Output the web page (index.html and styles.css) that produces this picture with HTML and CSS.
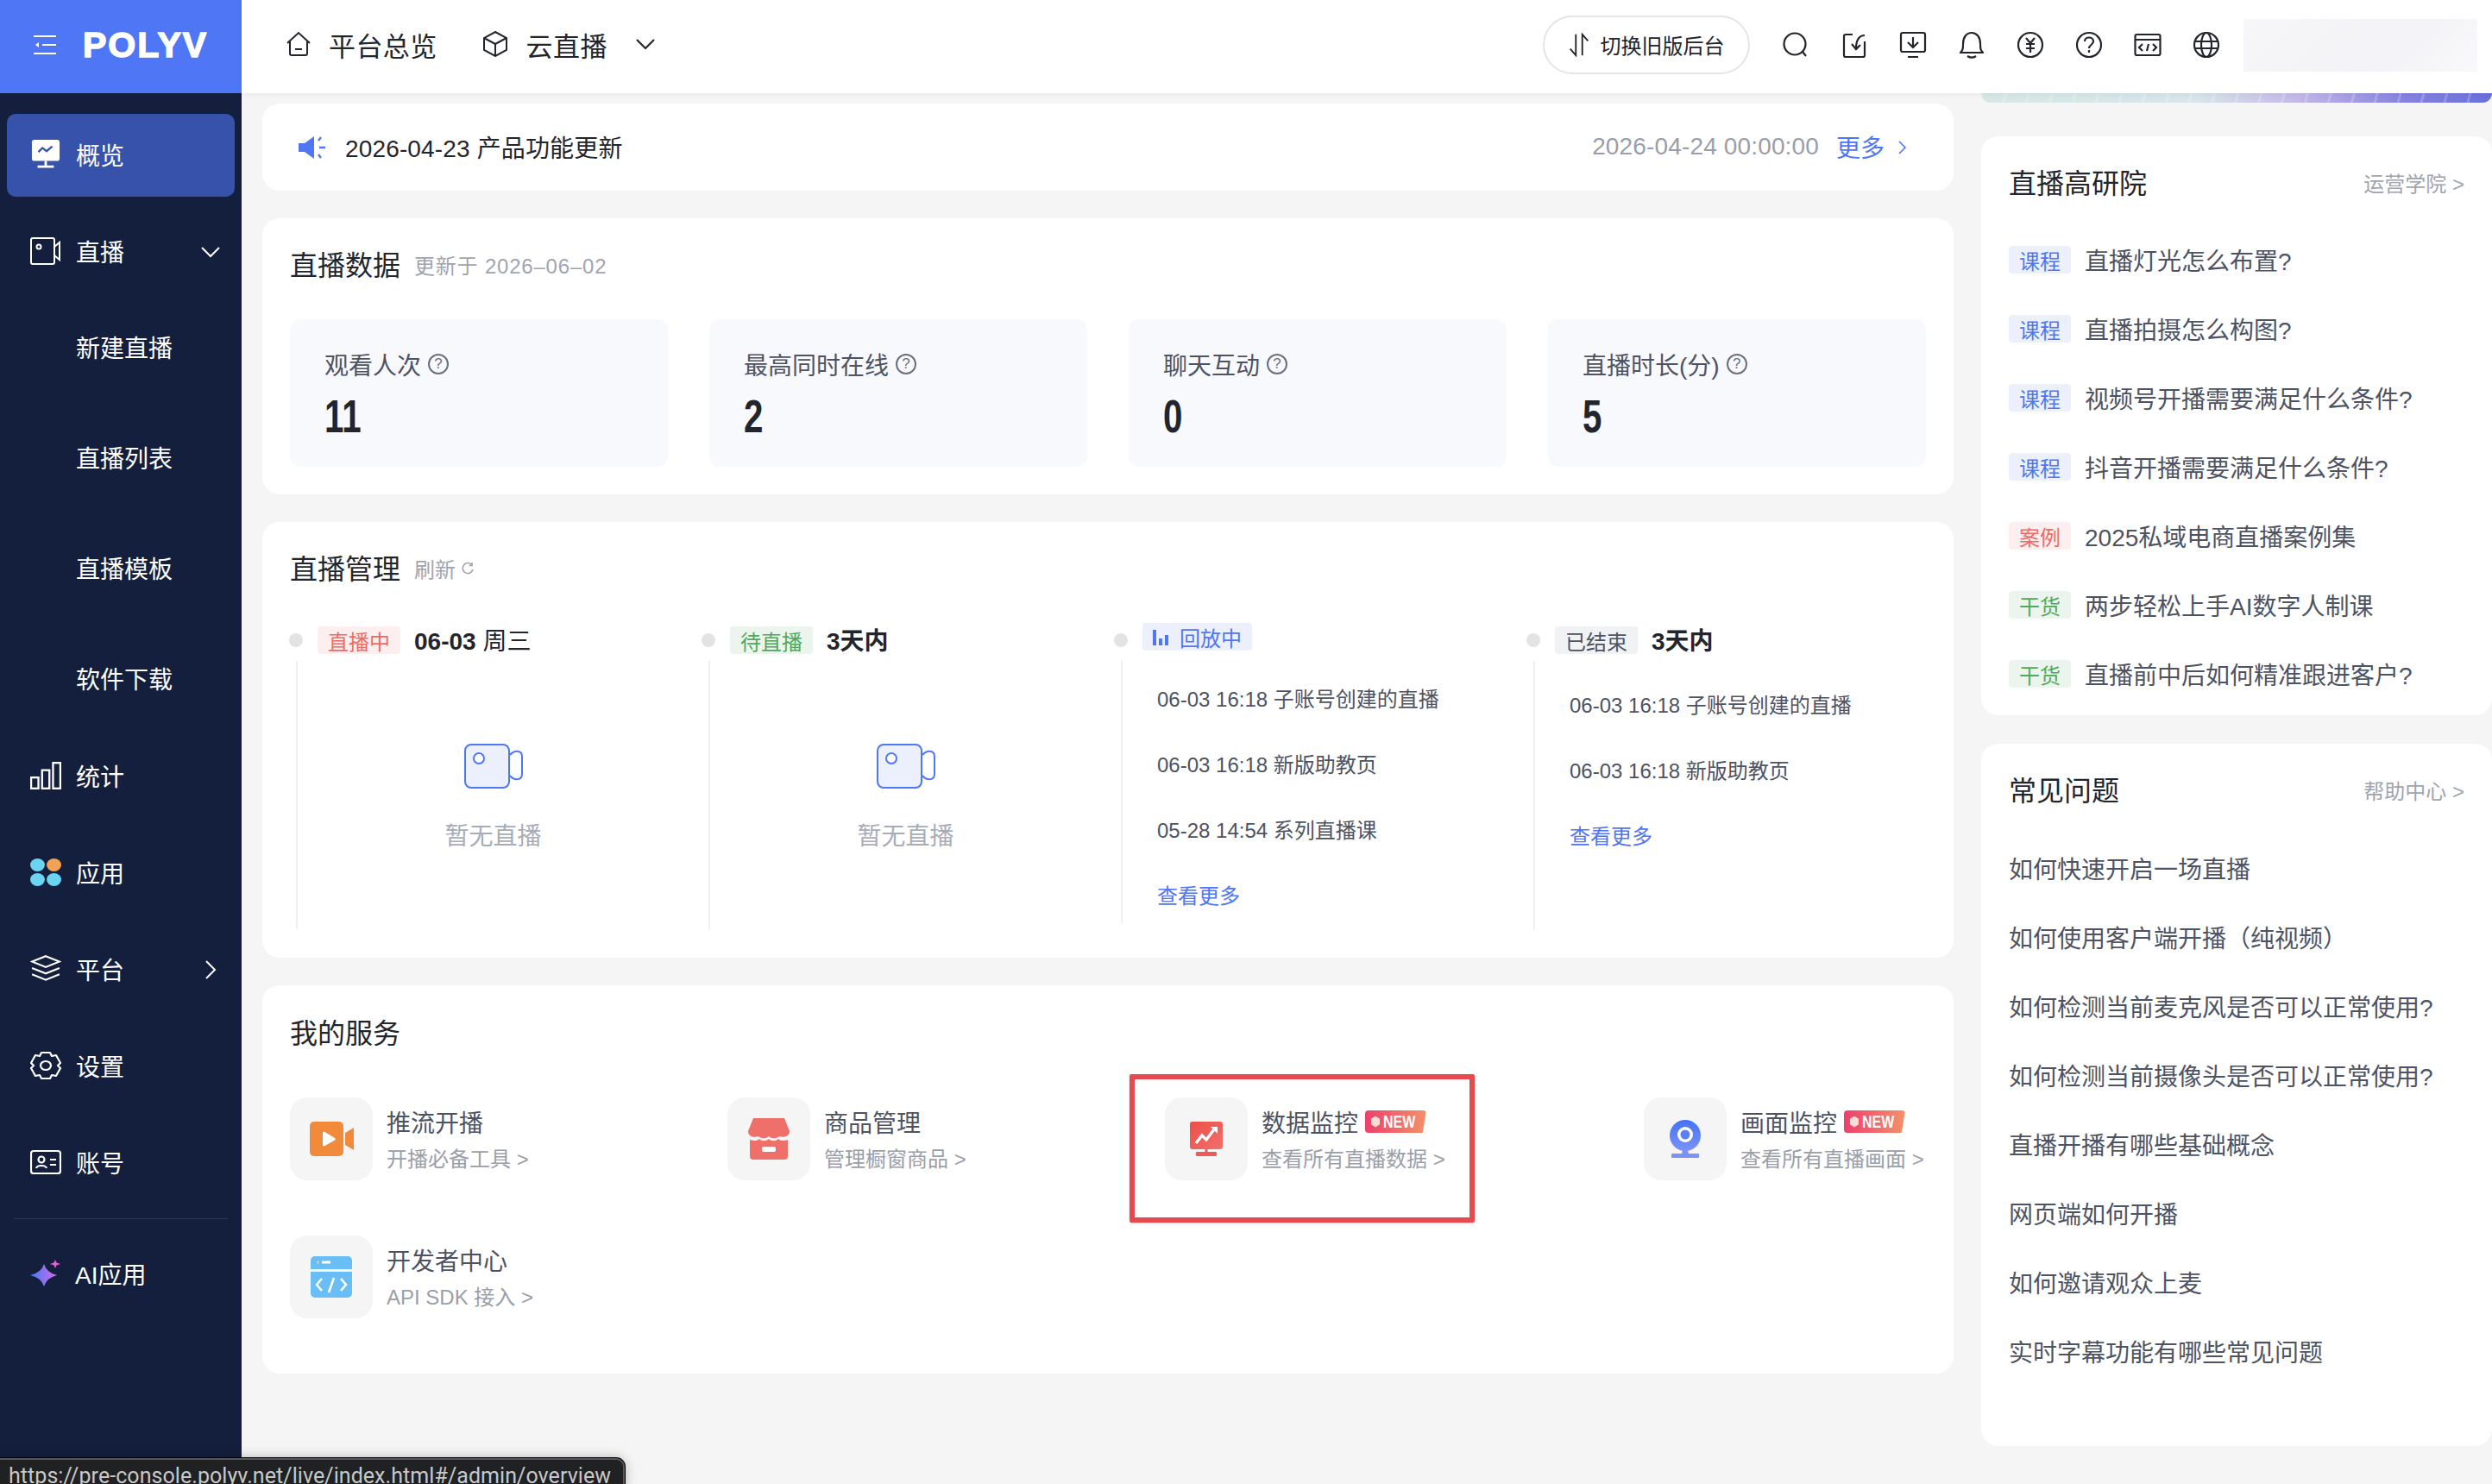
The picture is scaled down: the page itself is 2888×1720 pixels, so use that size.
FILE: index.html
```html
<!DOCTYPE html>
<html lang="zh-CN">
<head>
  <meta charset="UTF-8">
  <title>POLYV 概览</title>
  <link rel="stylesheet" href="styles.css">
</head>
<body>
  <div class="app">
    <!-- left sidebar -->
    <aside class="sidebar">
      <div class="brand">
        <svg class="brand-menu" viewBox="0 0 26 22" fill="none" stroke="#fff" stroke-width="2"><path d="M0 1h26M10 11h16M0 21h26"/><path d="M6 8l-4 3 4 3z" fill="#fff" stroke="none"/></svg>
        <span class="brand-name">POLYV</span>
      </div>
      <nav class="side-nav">
        <a class="side-item active">
          <svg class="side-icon" viewBox="0 0 36 36"><rect x="1" y="0" width="34" height="26" rx="3" fill="#fff"/><path d="M9 15l5-5 5 4 7-6" fill="none" stroke="#3752ab" stroke-width="2.4"/><path d="M18 26v6M8 33h20" stroke="#fff" stroke-width="3"/></svg>
          <span>概览</span>
        </a>
        <a class="side-item open">
          <svg class="side-icon" viewBox="0 0 36 32" fill="none" stroke="#fff" stroke-width="2"><rect x="1" y="1" width="27" height="30" rx="2"/><circle cx="10" cy="11" r="2.5"/><path d="M28 11l6-5v20l-6-5"/></svg>
          <span>直播</span>
          <svg class="side-caret" viewBox="0 0 22 14" fill="none" stroke="#fff" stroke-width="2"><path d="M1 2l10 10L21 2"/></svg>
        </a>
        <a class="side-sub">新建直播</a>
        <a class="side-sub">直播列表</a>
        <a class="side-sub">直播模板</a>
        <a class="side-sub">软件下载</a>
        <a class="side-item">
          <svg class="side-icon" viewBox="0 0 34 30" fill="none" stroke="#fff" stroke-width="2.2"><rect x="1" y="17" width="8" height="12"/><rect x="13" y="9" width="8" height="20"/><rect x="25" y="1" width="8" height="28"/></svg>
          <span>统计</span>
        </a>
        <a class="side-item">
          <svg class="side-icon" viewBox="0 0 34 32"><ellipse cx="8" cy="8" rx="8" ry="7" fill="#6ad4f2"/><ellipse cx="26" cy="8" rx="8" ry="7" fill="#f2a255"/><ellipse cx="8" cy="24" rx="8" ry="7" fill="#6ad4f2"/><ellipse cx="26" cy="24" rx="8" ry="7" fill="#6ad4f2"/></svg>
          <span>应用</span>
        </a>
        <a class="side-item">
          <svg class="side-icon" viewBox="0 0 34 30" fill="none" stroke="#fff" stroke-width="2"><path d="M17 1l15 6-15 6L2 7z"/><path d="M2 14l15 6 15-6"/><path d="M2 21l15 6 15-6"/></svg>
          <span>平台</span>
          <svg class="side-caret side-caret-right" viewBox="0 0 14 22" fill="none" stroke="#fff" stroke-width="2"><path d="M2 1l10 10L2 21"/></svg>
        </a>
        <a class="side-item">
          <svg class="side-icon" viewBox="0 0 36 34" fill="none" stroke="#fff" stroke-width="2.2" stroke-linejoin="round"><path d="M13 2h10l2 4 5-1 5 9-3 3 3 3-5 9-5-1-2 4H13l-2-4-5 1-5-9 3-3-3-3 5-9 5 1z"/><ellipse cx="18" cy="17" rx="6" ry="5"/></svg>
          <span>设置</span>
        </a>
        <a class="side-item">
          <svg class="side-icon" viewBox="0 0 36 30" fill="none" stroke="#fff" stroke-width="2.2"><rect x="1" y="2" width="34" height="26" rx="3"/><circle cx="13" cy="12" r="3.5"/><path d="M7 22c1-4 11-4 12 0M23 12h7M23 18h7"/></svg>
          <span>账号</span>
        </a>
        <div class="side-divider"></div>
        <a class="side-item side-ai">
          <svg class="side-icon" viewBox="0 0 36 32"><defs><linearGradient id="aiGrad" x1="0" x2="1" y1="0" y2="0"><stop offset="0" stop-color="#3e7cf6"/><stop offset="1" stop-color="#d46be6"/></linearGradient></defs><path d="M16 5Q19 15 31 18Q19 21 16 31Q13 21 0 18Q13 15 16 5z" fill="url(#aiGrad)"/><path d="M29 0l1.500 3.500L35 5l-4.500 1.500L29 10l-1.500-3.500L23 5l4.500-1.500z" fill="#e75fd8"/></svg>
          <span>AI应用</span>
        </a>
      </nav>
    </aside>

    <div class="main">
      <!-- top bar -->
      <header class="topbar">
        <a class="top-link">
          <svg class="top-link-icon" viewBox="0 0 30 30" fill="none" stroke="#22252c" stroke-width="2"><path d="M2 14L15 2l13 12M5 12v14a2 2 0 0 0 2 2h16a2 2 0 0 0 2-2V12"/><path d="M11 21h8"/></svg>
          <span>平台总览</span>
        </a>
        <a class="top-link">
          <svg class="top-link-icon top-link-icon-wide" viewBox="0 0 30 30" fill="none" stroke="#22252c" stroke-width="2"><path d="M15 1l13 7v14l-13 7-13-7V8z"/><path d="M2 8l13 7 13-7M15 15v14"/></svg>
          <span>云直播</span>
          <svg class="top-caret" viewBox="0 0 22 14" fill="none" stroke="#22252c" stroke-width="2.2"><path d="M1 2l10 10L21 2"/></svg>
        </a>
        <div class="top-right">
          <button class="switch-btn">
            <svg class="switch-icon" viewBox="0 0 24 30" fill="none" stroke="#22252c" stroke-width="2"><path d="M8 2v26l-7-8M16 28V2l7 8"/></svg>
            切换旧版后台
          </button>
          <div class="top-icons">
            <svg viewBox="0 0 32 32" fill="none" stroke="#22252c" stroke-width="2.2"><circle cx="15" cy="15" r="12.500"/><path d="M24 24l4 5"/></svg>
            <svg viewBox="0 0 32 32" fill="none" stroke="#22252c" stroke-width="2.2"><path d="M14 4H6a2 2 0 0 0-2 2v22a2 2 0 0 0 2 2h20a2 2 0 0 0 2-2V12"/><path d="M28 5c-6 0-10 5-10 15M13 15l5 6 5-5"/></svg>
            <svg viewBox="0 0 32 32" fill="none" stroke="#22252c" stroke-width="2.2"><rect x="2" y="2" width="28" height="22" rx="2"/><path d="M16 7v11M10 13l6 6 6-6M10 30h12"/></svg>
            <svg viewBox="0 0 32 32" fill="none" stroke="#22252c" stroke-width="2.2" stroke-linejoin="round"><path d="M3 25h26c-3-3-3-5-3-10C26 7 22 2 16 2S6 7 6 15c0 5 0 7-3 10z"/><path d="M11 29c3 2 7 2 10 0"/></svg>
            <svg viewBox="0 0 32 32" fill="none" stroke="#22252c" stroke-width="2.2"><circle cx="16" cy="16" r="14"/><path d="M11 8l5 6 5-6M16 14v11M11 15h10M11 20h10"/></svg>
            <svg viewBox="0 0 32 32" fill="none" stroke="#22252c" stroke-width="2.2"><circle cx="16" cy="16" r="14"/><path d="M11 12c0-6 10-6 10 0 0 4-5 4-5 8M16 22v3"/></svg>
            <svg viewBox="0 0 32 32" fill="none" stroke="#22252c" stroke-width="2.2"><rect x="1.500" y="4" width="29" height="24" rx="2"/><path d="M1.500 10h29M10 15l-4 4 4 4M22 15l4 4-4 4M17 15l-2 8"/></svg>
            <svg viewBox="0 0 32 32" fill="none" stroke="#22252c" stroke-width="2.2"><circle cx="16" cy="16" r="14"/><ellipse cx="16" cy="16" rx="6" ry="14"/><path d="M2 12h28M2 20h28"/></svg>
          </div>
          <div class="user-blur"></div>
        </div>
      </header>

      <div class="content">
        <div class="col-left">
          <!-- notice -->
          <section class="card notice">
            <svg class="notice-icon" viewBox="0 0 32 28"><path d="M0 9h7l11-8v26L7 19H0z" fill="#4f76f5"/><path d="M23 6l3-4M24 14h7M23 22l3 4" stroke="#4f76f5" stroke-width="2.400"/></svg>
            <span class="notice-text">2026-04-23 产品功能更新</span>
            <span class="notice-date">2026-04-24 00:00:00</span>
            <a class="notice-more">更多</a>
            <svg class="notice-arrow" viewBox="0 0 10 16" fill="none" stroke="#4f76f5" stroke-width="1.600"><path d="M1 1l7 7-7 7"/></svg>
          </section>

          <!-- live data -->
          <section class="card data-card">
            <div class="card-head">
              <h2 class="card-title">直播数据</h2>
              <span class="card-sub">更新于 2026–06–02</span>
            </div>
            <div class="stat-row">
              <div class="stat"><div class="stat-label">观看人次<span class="help">?</span></div><div class="stat-value">11</div></div>
              <div class="stat"><div class="stat-label">最高同时在线<span class="help">?</span></div><div class="stat-value">2</div></div>
              <div class="stat"><div class="stat-label">聊天互动<span class="help">?</span></div><div class="stat-value">0</div></div>
              <div class="stat"><div class="stat-label">直播时长(分)<span class="help">?</span></div><div class="stat-value">5</div></div>
            </div>
          </section>

          <!-- live management -->
          <section class="card manage-card">
            <div class="card-head">
              <h2 class="card-title">直播管理</h2>
              <span class="card-sub card-sub-plain">刷新</span>
              <svg class="refresh-icon" viewBox="0 0 16 16" fill="none" stroke="#a0a4ae" stroke-width="1.600"><path d="M13 4a6 6 0 1 0 1 5M13 1v3.500h-3.500"/></svg>
            </div>
            <div class="timeline">
              <div class="tl-col">
                <div class="tl-head">
                  <span class="tag tag-red">直播中</span>
                  <span class="tl-date"><b>06-03</b> 周三</span>
                </div>
                <div class="tl-body tl-empty">
                  <svg class="empty-icon" viewBox="0 0 68 52" fill="#ecf0fd" stroke="#4f76f5" stroke-width="2"><rect x="1" y="1" width="51" height="50" rx="7"/><ellipse cx="17" cy="17" rx="6" ry="6" fill="#fff"/><path d="M53 13c5-6 14-6 14 2v20c0 8-9 8-14 2" fill="#fff"/></svg>
                  <p>暂无直播</p>
                </div>
              </div>
              <div class="tl-col">
                <div class="tl-head">
                  <span class="tag tag-green">待直播</span>
                  <span class="tl-date"><b>3天内</b></span>
                </div>
                <div class="tl-body tl-empty">
                  <svg class="empty-icon" viewBox="0 0 68 52" fill="#ecf0fd" stroke="#4f76f5" stroke-width="2"><rect x="1" y="1" width="51" height="50" rx="7"/><ellipse cx="17" cy="17" rx="6" ry="6" fill="#fff"/><path d="M53 13c5-6 14-6 14 2v20c0 8-9 8-14 2" fill="#fff"/></svg>
                  <p>暂无直播</p>
                </div>
              </div>
              <div class="tl-col">
                <div class="tl-head tl-head-up">
                  <span class="tag tag-blue">
                    <svg class="bars-icon" viewBox="0 0 18 20" fill="#4f76f5"><rect x="0" y="2" width="4" height="18"/><rect x="7" y="12" width="4" height="8"/><rect x="14" y="8" width="4" height="12"/></svg>
                    回放中
                  </span>
                </div>
                <div class="tl-body tl-list tl-short">
                  <a>06-03 16:18 子账号创建的直播</a>
                  <a>06-03 16:18 新版助教页</a>
                  <a>05-28 14:54 系列直播课</a>
                  <a class="tl-more">查看更多</a>
                </div>
              </div>
              <div class="tl-col">
                <div class="tl-head">
                  <span class="tag tag-gray">已结束</span>
                  <span class="tl-date"><b>3天内</b></span>
                </div>
                <div class="tl-body tl-list tl-low">
                  <a>06-03 16:18 子账号创建的直播</a>
                  <a>06-03 16:18 新版助教页</a>
                  <a class="tl-more">查看更多</a>
                </div>
              </div>
            </div>
          </section>

          <!-- services -->
          <section class="card service-card">
            <h2 class="card-title">我的服务</h2>
            <div class="service-grid">
              <div class="service">
                <div class="service-icon">
                  <svg class="ico-push" viewBox="0 0 51 40"><path d="M5 0h29a5 5 0 0 1 5 5v30a5 5 0 0 1-5 5H5a5 5 0 0 1-5-5V5a5 5 0 0 1 5-5z" fill="#f28a3c"/><path d="M41 13l10-6v26l-10-6z" fill="#f28a3c"/><path d="M15 13a1.500 1.500 0 0 1 2.500-1L29 19a1.500 1.500 0 0 1 0 2.500L17.500 28a1.500 1.500 0 0 1-2.500-1z" fill="#fff"/></svg>
                </div>
                <div class="service-text"><div class="service-name">推流开播</div><div class="service-sub">开播必备工具 &gt;</div></div>
              </div>
              <div class="service">
                <div class="service-icon">
                  <svg viewBox="0 0 48 48"><path d="M6 0h36l6 15c0 6-6 8-12 6-3 3-9 3-12 0-3 3-9 3-12 0-6 2-12 0-12-6z" fill="#ef706b"/><path d="M2 25c6 2 9 1 11-1 3 3 8 3 11 0 3 3 8 3 11 0 2 2 5 3 11 1v19a4 4 0 0 1-4 4H6a4 4 0 0 1-4-4z" fill="#ef706b"/><rect x="16" y="33" width="16" height="6" rx="2" fill="#fff"/></svg>
                </div>
                <div class="service-text"><div class="service-name">商品管理</div><div class="service-sub">管理橱窗商品 &gt;</div></div>
              </div>
              <div class="service">
                <div class="service-icon">
                  <svg class="ico-mon" viewBox="0 0 38 40"><defs><linearGradient id="monGrad" x1="0" x2="1" y1="0" y2="1"><stop offset="0" stop-color="#ec4f49"/><stop offset="1" stop-color="#f2706c"/></linearGradient></defs><rect width="38" height="32" rx="3" fill="url(#monGrad)"/><path d="M7 25l7-9 5 5 9-12" fill="none" stroke="#fff" stroke-width="3.400"/><path d="M24 6h8v8z" fill="#fff"/><path d="M19 32v3" stroke="#ee5a55" stroke-width="3"/><rect x="7" y="35" width="24" height="5" rx="1" fill="#ee5a55"/></svg>
                </div>
                <div class="service-text">
                  <div class="service-name">数据监控<span class="new-badge"><i></i><span>NEW</span></span></div>
                  <div class="service-sub">查看所有直播数据 &gt;</div>
                </div>
                <div class="focus-box"></div>
              </div>
              <div class="service">
                <div class="service-icon">
                  <svg class="ico-cam" viewBox="0 0 36 44"><defs><linearGradient id="camGrad" x1="0" x2="0" y1="0" y2="1"><stop offset="0" stop-color="#4472f5"/><stop offset="1" stop-color="#7b92f7"/></linearGradient></defs><ellipse cx="18" cy="18" rx="18" ry="18" fill="url(#camGrad)"/><circle cx="18" cy="17" r="9" fill="#fff"/><circle cx="18" cy="17" r="5.500" fill="#5a80f5"/><path d="M15 35h6l1 4h-8z" fill="#7b92f7"/><rect x="2" y="39" width="32" height="5" rx="1" fill="#7b92f7"/></svg>
                </div>
                <div class="service-text">
                  <div class="service-name">画面监控<span class="new-badge"><i></i><span>NEW</span></span></div>
                  <div class="service-sub">查看所有直播画面 &gt;</div>
                </div>
              </div>
              <div class="service">
                <div class="service-icon">
                  <svg viewBox="0 0 48 48"><path d="M5 0h38a5 5 0 0 1 5 5v10H0V5a5 5 0 0 1 5-5z" fill="#69bff5"/><path d="M0 18h48v25a5 5 0 0 1-5 5H5a5 5 0 0 1-5-5z" fill="#69bff5"/><path d="M8 7h1M13 7h10" stroke="#fff" stroke-width="3"/><path d="M13 26l-6 7 6 7M35 26l6 7-6 7M27 25l-6 17" fill="none" stroke="#fff" stroke-width="2.600"/></svg>
                </div>
                <div class="service-text"><div class="service-name">开发者中心</div><div class="service-sub">API SDK 接入 &gt;</div></div>
              </div>
            </div>
          </section>
        </div>

        <div class="col-right">
          <div class="banner"></div>
          <section class="card side-card">
            <div class="side-head">
              <h2 class="card-title">直播高研院</h2>
              <a class="side-link">运营学院 &gt;</a>
            </div>
            <ul class="side-list">
              <li><span class="tag tag-blue">课程</span>直播灯光怎么布置?</li>
              <li><span class="tag tag-blue">课程</span>直播拍摄怎么构图?</li>
              <li><span class="tag tag-blue">课程</span>视频号开播需要满足什么条件?</li>
              <li><span class="tag tag-blue">课程</span>抖音开播需要满足什么条件?</li>
              <li><span class="tag tag-red">案例</span>2025私域电商直播案例集</li>
              <li><span class="tag tag-green">干货</span>两步轻松上手AI数字人制课</li>
              <li><span class="tag tag-green">干货</span>直播前中后如何精准跟进客户?</li>
            </ul>
          </section>
          <section class="card side-card faq-card">
            <div class="side-head">
              <h2 class="card-title">常见问题</h2>
              <a class="side-link">帮助中心 &gt;</a>
            </div>
            <ul class="side-list">
              <li>如何快速开启一场直播</li>
              <li>如何使用客户端开播（纯视频）</li>
              <li>如何检测当前麦克风是否可以正常使用?</li>
              <li>如何检测当前摄像头是否可以正常使用?</li>
              <li>直播开播有哪些基础概念</li>
              <li>网页端如何开播</li>
              <li>如何邀请观众上麦</li>
              <li>实时字幕功能有哪些常见问题</li>
            </ul>
          </section>
        </div>
      </div>
    </div>
  </div>

  <div class="status-bar">https://pre-console.polyv.net/live/index.html#/admin/overview</div>
</body>
</html>
```

FILE: styles.css
```css
* {
  box-sizing: border-box;
}
html, body {
  height: 100%;
  margin: 0;
  overflow: hidden;
}
body {
  font-family: "Liberation Sans", "Noto Sans CJK SC", sans-serif;
  background-color: #f5f5f5;
  color: #22252c;
}
h2, p, ul {
  margin: 0;
  padding: 0;
}
.app {
  display: flex;
  height: 1720px;
}

/* sidebar */
.sidebar {
  width: 280px;
  flex-shrink: 0;
  background-color: #141f3d;
  color: #fff;
}
.brand {
  height: 108px;
  display: flex;
  align-items: center;
  padding-left: 39px;
  padding-bottom: 4px;
  background-color: #4f76f5;
}
.brand-menu {
  width: 26px;
  height: 22px;
}
.brand-name {
  margin-left: 31px;
  font-family: "Liberation Sans", sans-serif;
  font-size: 41px;
  font-weight: 700;
  letter-spacing: 2px;
  line-height: 1;
  -webkit-text-stroke: 1.5px #fff;
}
.side-nav {
  padding: 24px 8px 0;
}
.side-item {
  height: 96px;
  margin-bottom: 16px;
  display: flex;
  align-items: center;
  padding-left: 27px;
  padding-bottom: 2px;
  font-size: 28px;
  border-radius: 10px;
  position: relative;
}
.side-item.open {
  margin-bottom: 0;
}
.side-item.active {
  background-color: #3752ab;
}
.side-icon {
  width: 36px;
  height: 34px;
  margin-right: 17px;
  flex-shrink: 0;
}
.side-caret {
  position: absolute;
  right: 17px;
  top: 41px;
  width: 22px;
  height: 14px;
}
.side-caret-right {
  right: 21px;
  top: 37px;
  width: 14px;
  height: 22px;
}
.side-sub {
  display: block;
  height: 128px;
  line-height: 129px;
  padding-left: 80px;
  font-size: 28px;
}
.side-divider {
  height: 1px;
  margin: 0 8px 0;
  background-color: #2d3857;
}
.side-ai {
  margin-top: 16px;
}
.side-ai .side-icon {
  margin-right: 16px;
}

/* top bar */
.main {
  flex: 1;
  min-width: 0;
}
.topbar {
  height: 108px;
  display: flex;
  align-items: center;
  padding: 0 17px 6px 51px;
  background-color: #fff;
  box-shadow: 0 2px 8px rgba(0, 0, 0, 0.05);
  position: relative;
  z-index: 2;
}
.top-link {
  display: flex;
  align-items: center;
  margin-right: 52px;
  font-size: 31px;
  letter-spacing: 0.4px;
}
.top-link-icon {
  width: 30px;
  height: 30px;
  margin-right: 20px;
}
.top-link-icon-wide {
  margin-right: 21px;
}
.top-caret {
  width: 22px;
  height: 14px;
  margin-left: 33px;
}
.top-right {
  margin-left: auto;
  display: flex;
  align-items: center;
  margin-top: 2px;
}
.switch-btn {
  width: 240px;
  height: 68px;
  display: flex;
  align-items: center;
  justify-content: center;
  gap: 13px;
  padding-bottom: 2px;
  border: 2px solid #e5e5e5;
  border-radius: 34px;
  background-color: #fff;
  color: #22252c;
  font-family: inherit;
  font-size: 24px;
}
.switch-icon {
  width: 24px;
  height: 28px;
}
.top-icons {
  display: flex;
  gap: 36px;
  margin-left: 37px;
  margin-right: 27px;
}
.top-icons svg {
  width: 32px;
  height: 32px;
}
.user-blur {
  width: 271px;
  height: 61px;
  background: linear-gradient(135deg, #f7f7f9, #f3f3f7 60%, #f9f9fb);
}

/* page columns */
.content {
  display: flex;
  gap: 32px;
  padding-left: 24px;
}
.col-left {
  width: 1960px;
  padding-top: 12px;
}
.col-right {
  width: 592px;
}
.card {
  background-color: #fff;
  border-radius: 20px;
  margin-bottom: 32px;
}
.card-head {
  display: flex;
  align-items: center;
}
.card-title {
  font-size: 32px;
  font-weight: 400;
  line-height: 44px;
  color: #22252c;
}
.card-sub {
  margin-left: 16px;
  margin-bottom: 4px;
  font-size: 24px;
  letter-spacing: 0.8px;
  color: #a0a4ae;
}
.card-sub-plain {
  letter-spacing: 0;
}

/* notice */
.notice {
  height: 101px;
  display: flex;
  align-items: center;
  padding: 0 54px 0 42px;
  font-size: 28px;
}
.notice-icon {
  width: 32px;
  height: 28px;
  margin-right: 22px;
}
.notice-text {
  letter-spacing: 0.15px;
  margin-bottom: 2px;
}
.notice-date {
  margin-left: auto;
  margin-bottom: 2px;
  letter-spacing: 0.15px;
  color: #9a9ea8;
}
.notice-more {
  margin-left: 20px;
  margin-bottom: 2px;
  color: #4f76f5;
}
.notice-arrow {
  width: 10px;
  height: 16px;
  margin-left: 16px;
}

/* live data */
.data-card {
  height: 320px;
  padding: 33px 32px 0;
}
.stat-row {
  display: flex;
  gap: 48px;
  margin-top: 40px;
}
.stat {
  width: 438px;
  height: 171px;
  padding: 32px 40px 0;
  background-color: #f8f9fd;
  border-radius: 12px;
}
.stat-label {
  display: flex;
  align-items: center;
  height: 40px;
  font-size: 28px;
  color: #4d5363;
}
.help {
  width: 24px;
  height: 24px;
  margin-left: 8px;
  border: 2px solid #6b7080;
  border-radius: 50%;
  font-size: 17px;
  line-height: 20px;
  text-align: center;
  color: #6b7080;
}
.stat-value {
  margin-top: 13px;
  font-size: 53px;
  font-weight: 700;
  line-height: 56px;
  color: #22252c;
  transform: scaleX(0.76);
  transform-origin: left center;
}

/* live management */
.manage-card {
  height: 505px;
  padding: 33px 32px 0;
}
.refresh-icon {
  width: 16px;
  height: 16px;
  margin-left: 6px;
  margin-bottom: 2px;
}
.timeline {
  display: grid;
  grid-template-columns: repeat(4, 478px);
  margin-top: 44px;
}
.tl-col {
  position: relative;
}
.tl-head {
  height: 32px;
  display: flex;
  align-items: center;
  padding-left: 32px;
  position: relative;
}
.tl-head::before {
  content: "";
  position: absolute;
  left: -1px;
  top: 8px;
  width: 16px;
  height: 16px;
  border-radius: 50%;
  background-color: #e3e3e3;
}
.tl-head-up .tag {
  margin-top: -8px;
}
.tl-date {
  margin-left: 16px;
  margin-bottom: 2px;
  font-size: 28px;
  color: #22252c;
}
.tag {
  display: inline-flex;
  align-items: center;
  justify-content: center;
  height: 32px;
  min-width: 72px;
  padding: 0 12px;
  border-radius: 4px;
  font-size: 24px;
  flex-shrink: 0;
}
.tag-red {
  background-color: #fdefef;
  color: #ef6a66;
}
.tag-green {
  background-color: #ebf5ee;
  color: #4fa95c;
}
.tag-blue {
  background-color: #ecf0fd;
  color: #4f76f5;
}
.tag-gray {
  background-color: #f1f2f4;
  color: #4d5363;
}
.bars-icon {
  width: 18px;
  height: 20px;
  margin-right: 13px;
}
.tl-body {
  margin-top: 8px;
  margin-left: 7px;
  height: 311px;
  border-left: 2px solid #f0f0f0;
}
.tl-short {
  height: 304px;
}
.tl-empty {
  display: flex;
  flex-direction: column;
  align-items: center;
  padding: 96px 16px 0 0;
  color: #a8acb8;
  font-size: 28px;
}
.empty-icon {
  width: 68px;
  height: 52px;
}
.empty-icon + p {
  margin-top: 33px;
}
.tl-list {
  padding-left: 40px;
  font-size: 24px;
  color: #4d5363;
}
.tl-list a {
  display: block;
  height: 76px;
  line-height: 76px;
}
.tl-short {
  padding-top: 7px;
}
.tl-low {
  padding-top: 14px;
}
.tl-list a.tl-more {
  color: #4f76f5;
}

/* services */
.service-card {
  height: 450px;
  padding: 34px 32px 0;
}
.service-grid {
  display: grid;
  grid-template-columns: 507px 507px 555px 327px;
  row-gap: 64px;
  margin-top: 52px;
}
.service {
  display: flex;
  align-items: flex-start;
  position: relative;
}
.service-icon {
  width: 96px;
  height: 96px;
  display: flex;
  align-items: center;
  justify-content: center;
  flex-shrink: 0;
  background-color: #f5f5f5;
  border-radius: 20px;
}
.service-icon svg {
  width: 48px;
  height: 48px;
}
.service-icon .ico-push {
  width: 51px;
  height: 40px;
}
.service-icon .ico-mon {
  width: 38px;
  height: 40px;
}
.service-icon .ico-cam {
  width: 36px;
  height: 44px;
}
.service-text {
  margin-left: 16px;
  white-space: nowrap;
}
.service-name {
  display: flex;
  align-items: center;
  height: 40px;
  margin-top: 8px;
  font-size: 28px;
  color: #4d5363;
}
.service-sub {
  margin-top: 10px;
  font-size: 24px;
  line-height: 28px;
  color: #9a9ea8;
}
.new-badge {
  display: inline-flex;
  align-items: center;
  width: 71px;
  height: 26px;
  margin-left: 8px;
  padding-left: 7px;
  background: linear-gradient(90deg, #ee3f6c, #f4916a);
  border-radius: 4px;
  clip-path: polygon(0 0, 100% 0, 94% 100%, 0 100%);
  color: #fff;
  font-size: 20px;
  font-weight: 700;
}
.new-badge i {
  width: 10px;
  height: 13px;
  margin-right: 4px;
  background-color: #fbdcd6;
  clip-path: polygon(50% 0, 100% 25%, 100% 75%, 50% 100%, 0 75%, 0 25%);
}
.new-badge span {
  display: inline-block;
  transform: scaleX(0.8);
  transform-origin: left center;
}
/* red highlight over the 数据监控 entry */
.focus-box {
  position: absolute;
  left: -41px;
  top: -27px;
  width: 400px;
  height: 172px;
  border: 6px solid #e64a4d;
  border-radius: 2px;
  box-shadow: 0 1px 3px rgba(0, 0, 0, 0.15);
}

/* right column */
.banner {
  height: 11px;
  margin-bottom: 39px;
  border-radius: 0 0 14px 14px;
  background:
    repeating-linear-gradient(105deg, rgba(255, 255, 255, 0.2) 0 3px, transparent 3px 26px),
    linear-gradient(90deg, #d6e8e6 0%, #d7e6e9 42%, #c4b8e8 62%, #8884e0 82%, #6a70dc 100%);
}
.side-card {
  height: 671px;
  padding: 33px 32px 0;
  margin-bottom: 33px;
}
.faq-card {
  height: 814px;
}
.side-head {
  display: flex;
  align-items: center;
  justify-content: space-between;
}
.side-link {
  margin-bottom: 4px;
  font-size: 24px;
  color: #a0a4ae;
}
.side-list {
  list-style: none;
  margin-top: 26px;
}
.side-list li {
  display: flex;
  align-items: center;
  height: 80px;
  font-size: 28px;
  color: #4d5363;
}
.side-list .tag {
  margin-right: 16px;
}
.faq-card .side-list {
  margin-top: 27px;
}

/* browser link preview */
.status-bar {
  position: absolute;
  left: 0;
  bottom: -6px;
  width: 724px;
  height: 36px;
  padding: 4px 0 0 10px;
  background-color: #1f2123;
  border-top: 2px solid #55575a;
  border-right: 2px solid #55575a;
  border-radius: 0 10px 0 0;
  box-shadow: 0 0 0 1px #000, 0 0 14px rgba(0, 0, 0, 0.3);
  color: #c8c8c8;
  font-family: Roboto, sans-serif;
  font-size: 25px;
  letter-spacing: 0.06px;
  line-height: 30px;
  white-space: nowrap;
}
```
